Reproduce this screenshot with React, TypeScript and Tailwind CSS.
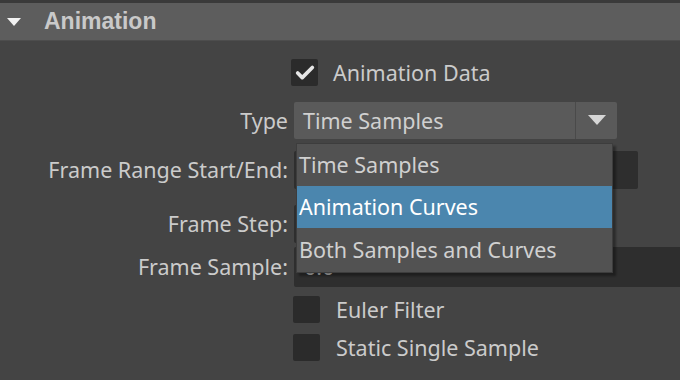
import { Check } from 'lucide-react';

const font = { fontFamily: '"Noto Sans", "Open Sans", sans-serif' };

const Box = ({ checked }: { checked?: boolean }) => (
  <div className="w-[27px] h-[27px] rounded-[2px] bg-[#2b2b2b] flex items-center justify-center shrink-0">
    {checked && <Check className="w-[22px] h-[22px] text-[#e6e6e6]" strokeWidth={4} />}
  </div>
);

const Label = ({ children }: { children: React.ReactNode }) => (
  <div className="w-[289px] shrink-0 text-right pr-[1px] text-[21.5px] text-[#cbcbcb] leading-none">{children}</div>
);

const App = () => {
  return (
    <div className="w-[680px] h-[380px] bg-[#444444] overflow-hidden" style={font}>
      <div className="h-[3px] bg-[#3a3a3a]" />
      <div className="h-[38px] bg-[#5d5d5d] flex items-center border-b border-[#4d4d4d]">
        <svg width="14" height="10" viewBox="0 0 14 10" className="ml-[7px]">
          <polygon points="0,1 14,1 7,9" fill="#f2f2f2" />
        </svg>
        <span
          className="ml-[23px] text-[23px] font-bold text-[#c9c9c9]"
          style={{ fontFamily: '"Liberation Sans", Arial, sans-serif' }}
        >
          Animation
        </span>
      </div>

      <div className="flex flex-col">
        <div className="flex items-center h-[27px] mt-[18px] pl-[291px]">
          <Box checked />
          <span className="ml-[15px] text-[21.5px] text-[#cbcbcb] leading-none">Animation Data</span>
        </div>

        <div className="flex items-center h-[37px] mt-[16px]">
          <Label>Type</Label>
          <div className="relative ml-[5px] w-[323px] h-[37px] bg-[#5a5a5a] rounded-[2px] flex">
            <div className="flex-1 flex items-center pl-[9px] text-[21.5px] text-[#d0d0d0] leading-none">Time Samples</div>
            <div className="w-[42px] border-l border-[#4a4a4a] flex items-center justify-center">
              <svg width="18" height="11" viewBox="0 0 18 11">
                <polygon points="0,0 18,0 9,10" fill="#d6d6d6" />
              </svg>
            </div>
            <div className="absolute left-[2px] top-[41px] w-[317px] bg-[#525252] border border-[#3d3d3d] shadow-[3px_3px_2px_rgba(0,0,0,0.35)] z-10 text-[21.5px] leading-none">
              <div className="h-[42px] flex items-center pl-[2px] text-[#d0d0d0]">Time Samples</div>
              <div className="h-[42px] flex items-center pl-[2px] bg-[#4b86ae] text-white">Animation Curves</div>
              <div className="h-[44px] flex items-center pl-[2px] text-[#d0d0d0]">Both Samples and Curves</div>
            </div>
          </div>
        </div>

        <div className="flex items-center h-[38px] mt-[12px]">
          <Label>Frame Range Start/End:</Label>
          <div className="ml-[5px] w-[344px] h-[38px] bg-[#2e2e2e] rounded-[2px]" />
        </div>

        <div className="flex items-center h-[38px] mt-[16px]">
          <Label>Frame Step:</Label>
          <div className="ml-[5px] w-[260px] h-[38px] bg-[#2e2e2e] rounded-[2px]" />
        </div>

        <div className="flex items-center h-[40px] mt-[4px]">
          <Label>Frame Sample:</Label>
          <div className="ml-[5px] flex-1 h-[40px] bg-[#2e2e2e] rounded-l-[2px] flex items-center pl-[10px] text-[21.5px] text-[#bdbdbd] leading-none">
            0.0
          </div>
        </div>

        <div className="flex items-center h-[27px] mt-[9px] pl-[293px]">
          <Box />
          <span className="ml-[16px] text-[21.5px] text-[#cbcbcb] leading-none">Euler Filter</span>
        </div>

        <div className="flex items-center h-[27px] mt-[11px] pl-[293px]">
          <Box />
          <span className="ml-[16px] text-[21.5px] text-[#cbcbcb] leading-none">Static Single Sample</span>
        </div>
      </div>
    </div>
  );
};

export default App;
